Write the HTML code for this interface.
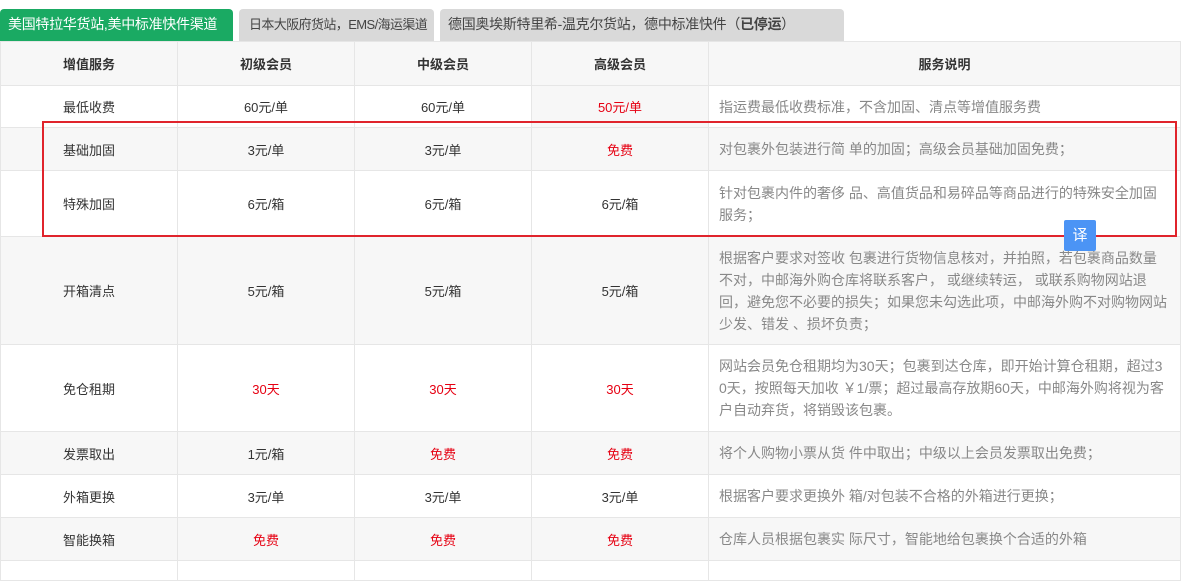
<!DOCTYPE html>
<html><head><meta charset="utf-8"><style>
body{margin:0;background:#fff;font-family:"Liberation Sans","Noto Sans CJK SC",sans-serif;font-size:13px;color:#333;width:1184px;height:565px;overflow:hidden;position:relative}
.tab{position:absolute;top:9px;height:32px;line-height:31px;border-radius:4px 4px 0 0;font-size:13px;padding:0 0 0 9px;box-sizing:border-box;white-space:nowrap;overflow:hidden}
table{position:absolute;top:41px;left:0;border-collapse:collapse;width:1180px;table-layout:fixed}
td,th{border:1px solid #e6e6e6;text-align:center;padding:0}
th{height:43px;font-weight:bold;font-size:13px;background:#f7f7f7}
td.d{text-align:left;color:#888;padding:0 10px;line-height:22px;font-size:14px}
tr.g td{background:#f7f7f7}
.r{color:#e60012}
</style></head><body>
<div class="tab" style="left:0;width:233px;background:#1aaa63;color:#fff;font-size:14px;padding-left:8px;letter-spacing:-0.3px">美国特拉华货站,美中标准快件渠道</div>
<div class="tab" style="left:239px;width:195px;background:#d9d9d9;color:#444;padding-left:10px;letter-spacing:-0.6px">日本大阪府货站，EMS/海运渠道</div>
<div class="tab" style="left:440px;width:404px;background:#d9d9d9;color:#444;font-size:14px;padding-left:8px;letter-spacing:-0.3px">德国奥埃斯特里希-温克尔货站，德中标准快件（<b>已停运</b>）</div>
<table>
<colgroup><col style="width:177px"><col style="width:177px"><col style="width:177px"><col style="width:177px"><col style="width:472px"></colgroup>
<tr><th>增值服务</th><th>初级会员</th><th>中级会员</th><th>高级会员</th><th>服务说明</th></tr>
<tr style="height:42px"><td>最低收费</td><td>60元/单</td><td>60元/单</td><td class="r" style="background:#f7f7f7">50元/单</td><td class="d">指运费最低收费标准，不含加固、清点等增值服务费</td></tr>
<tr class="g" style="height:43px"><td>基础加固</td><td>3元/单</td><td>3元/单</td><td class="r">免费</td><td class="d">对包裹外包装进行简 单的加固；高级会员基础加固免费；</td></tr>
<tr style="height:66px"><td>特殊加固</td><td>6元/箱</td><td>6元/箱</td><td>6元/箱</td><td class="d">针对包裹内件的奢侈 品、高值货品和易碎品等商品进行的特殊安全加固<br>服务；</td></tr>
<tr class="g" style="height:108px"><td>开箱清点</td><td>5元/箱</td><td>5元/箱</td><td>5元/箱</td><td class="d">根据客户要求对签收 包裹进行货物信息核对，并拍照，若包裹商品数量<br>不对，中邮海外购仓库将联系客户， 或继续转运， 或联系购物网站退<br>回，避免您不必要的损失；如果您未勾选此项，中邮海外购不对购物网站<br>少发、错发 、损坏负责；</td></tr>
<tr style="height:87px"><td>免仓租期</td><td class="r">30天</td><td class="r">30天</td><td class="r">30天</td><td class="d">网站会员免仓租期均为30天；包裹到达仓库，即开始计算仓租期，超过3<br>0天，按照每天加收 ￥1/票；超过最高存放期60天，中邮海外购将视为客<br>户自动弃货，将销毁该包裹。</td></tr>
<tr class="g" style="height:43px"><td>发票取出</td><td>1元/箱</td><td class="r">免费</td><td class="r">免费</td><td class="d">将个人购物小票从货 件中取出；中级以上会员发票取出免费；</td></tr>
<tr style="height:43px"><td>外箱更换</td><td>3元/单</td><td>3元/单</td><td>3元/单</td><td class="d">根据客户要求更换外 箱/对包装不合格的外箱进行更换；</td></tr>
<tr class="g" style="height:43px"><td>智能换箱</td><td class="r">免费</td><td class="r">免费</td><td class="r">免费</td><td class="d">仓库人员根据包裹实 际尺寸，智能地给包裹换个合适的外箱</td></tr>
<tr style="height:20px"><td></td><td></td><td></td><td></td><td></td></tr>
</table>
<div style="position:absolute;left:42px;top:121px;width:1131px;height:112px;border:2px solid #e0242c"></div>
<div style="position:absolute;left:1064px;top:220px;width:32px;height:31px;background:#4b94f5;color:#fff;font-size:15px;text-align:center;line-height:31px;border-radius:2px">译</div>
</body></html>
